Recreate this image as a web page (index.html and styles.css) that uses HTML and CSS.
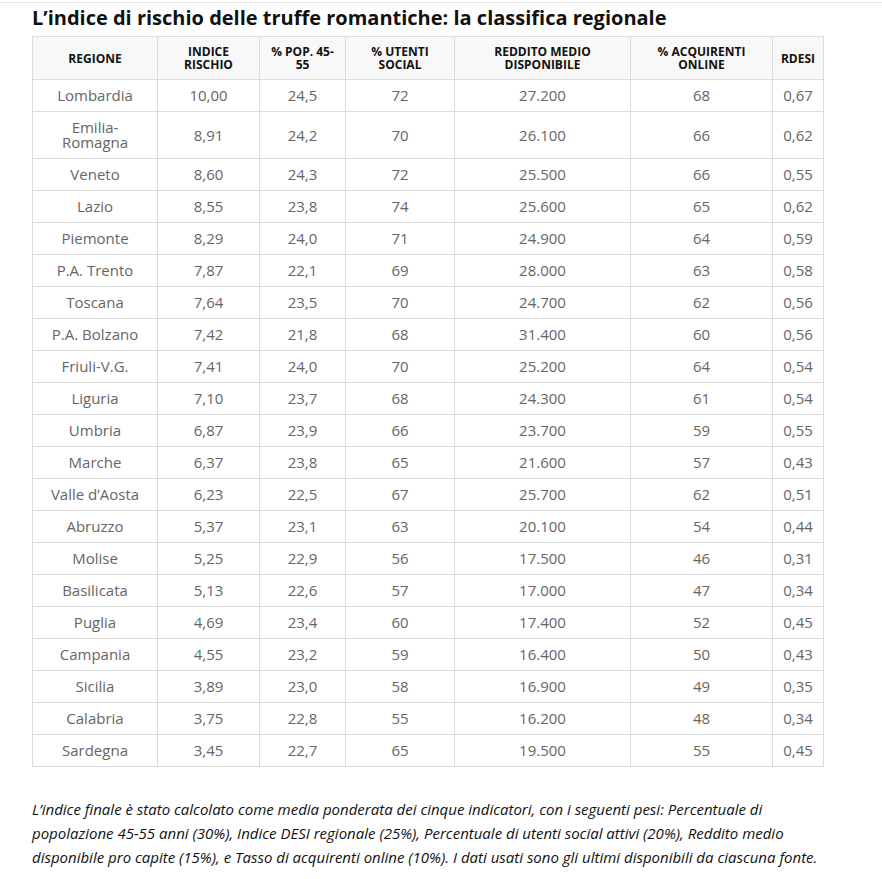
FILE: index.html
```html
<!DOCTYPE html>
<html lang="it">
<head>
<meta charset="utf-8">
<title>Truffe romantiche</title>
<link rel="stylesheet" href="styles.css">
</head>
<body>
<div class="topline"></div>
<main class="content">
<h2 class="title">L’indice di rischio delle truffe romantiche: la classifica regionale</h2>
<table class="tbl">
<colgroup>
<col class="c1"><col class="c2"><col class="c3"><col class="c4"><col class="c5"><col class="c6"><col class="c7">
</colgroup>
<thead>
<tr><th>Regione</th><th>Indice rischio</th><th>% Pop. 45-55</th><th>% Utenti social</th><th>Reddito medio disponibile</th><th>% Acquirenti online</th><th>RDESI</th></tr>
</thead>
<tbody>
<tr><td>Lombardia</td><td>10,00</td><td>24,5</td><td>72</td><td>27.200</td><td>68</td><td>0,67</td></tr>
<tr><td>Emilia-<br>Romagna</td><td>8,91</td><td>24,2</td><td>70</td><td>26.100</td><td>66</td><td>0,62</td></tr>
<tr><td>Veneto</td><td>8,60</td><td>24,3</td><td>72</td><td>25.500</td><td>66</td><td>0,55</td></tr>
<tr><td>Lazio</td><td>8,55</td><td>23,8</td><td>74</td><td>25.600</td><td>65</td><td>0,62</td></tr>
<tr><td>Piemonte</td><td>8,29</td><td>24,0</td><td>71</td><td>24.900</td><td>64</td><td>0,59</td></tr>
<tr><td>P.A. Trento</td><td>7,87</td><td>22,1</td><td>69</td><td>28.000</td><td>63</td><td>0,58</td></tr>
<tr><td>Toscana</td><td>7,64</td><td>23,5</td><td>70</td><td>24.700</td><td>62</td><td>0,56</td></tr>
<tr><td>P.A. Bolzano</td><td>7,42</td><td>21,8</td><td>68</td><td>31.400</td><td>60</td><td>0,56</td></tr>
<tr><td>Friuli-V.G.</td><td>7,41</td><td>24,0</td><td>70</td><td>25.200</td><td>64</td><td>0,54</td></tr>
<tr><td>Liguria</td><td>7,10</td><td>23,7</td><td>68</td><td>24.300</td><td>61</td><td>0,54</td></tr>
<tr><td>Umbria</td><td>6,87</td><td>23,9</td><td>66</td><td>23.700</td><td>59</td><td>0,55</td></tr>
<tr><td>Marche</td><td>6,37</td><td>23,8</td><td>65</td><td>21.600</td><td>57</td><td>0,43</td></tr>
<tr><td>Valle d’Aosta</td><td>6,23</td><td>22,5</td><td>67</td><td>25.700</td><td>62</td><td>0,51</td></tr>
<tr><td>Abruzzo</td><td>5,37</td><td>23,1</td><td>63</td><td>20.100</td><td>54</td><td>0,44</td></tr>
<tr><td>Molise</td><td>5,25</td><td>22,9</td><td>56</td><td>17.500</td><td>46</td><td>0,31</td></tr>
<tr><td>Basilicata</td><td>5,13</td><td>22,6</td><td>57</td><td>17.000</td><td>47</td><td>0,34</td></tr>
<tr><td>Puglia</td><td>4,69</td><td>23,4</td><td>60</td><td>17.400</td><td>52</td><td>0,45</td></tr>
<tr><td>Campania</td><td>4,55</td><td>23,2</td><td>59</td><td>16.400</td><td>50</td><td>0,43</td></tr>
<tr><td>Sicilia</td><td>3,89</td><td>23,0</td><td>58</td><td>16.900</td><td>49</td><td>0,35</td></tr>
<tr><td>Calabria</td><td>3,75</td><td>22,8</td><td>55</td><td>16.200</td><td>48</td><td>0,34</td></tr>
<tr><td>Sardegna</td><td>3,45</td><td>22,7</td><td>65</td><td>19.500</td><td>55</td><td>0,45</td></tr>
</tbody>
</table>
<p class="note">L’indice finale è stato calcolato come media ponderata dei cinque indicatori, con i seguenti pesi: Percentuale di popolazione 45-55 anni (30%), Indice DESI regionale (25%), Percentuale di utenti social attivi (20%), Reddito medio disponibile pro capite (15%), e Tasso di acquirenti online (10%). I dati usati sono gli ultimi disponibili da ciascuna fonte.</p>
</main>
</body>
</html>
```
FILE: styles.css
```css
html, body {
  margin: 0;
  padding: 0;
  background: #fff;
}
body {
  font-family: "Open Sans", "Noto Sans", sans-serif;
  color: #222;
}
.topline {
  margin-top: 2px;
  height: 1px;
  background: #e6e6e6;
}
.content {
  padding: 0 32px;
}
.title {
  margin: 0;
  padding-top: 2px;
  font-size: 20px;
  font-weight: 700;
  line-height: 26px;
  color: #111;
  height: 31px;
}
.tbl {
  border-collapse: collapse;
  width: 791px;
  table-layout: fixed;
}
.c1 { width: 125px; }
.c2 { width: 102px; }
.c3 { width: 86px; }
.c4 { width: 109px; }
.c5 { width: 176px; }
.c6 { width: 142px; }
.c7 { width: 51px; }
.tbl th, .tbl td {
  border: 1px solid #dcdcdc;
  text-align: center;
  padding: 8px 6px;
}
.tbl th {
  background: #f8f8f8;
  font-size: 12px;
  font-weight: 700;
  line-height: 13px;
  text-transform: uppercase;
  color: #111;
}
.tbl td {
  font-size: 15px;
  line-height: 15px;
  color: #666;
}
.note {
  margin: 30px 0 0;
  font-size: 15px;
  font-style: italic;
  line-height: 24px;
  color: #111;
  max-width: 790px;
}
```
